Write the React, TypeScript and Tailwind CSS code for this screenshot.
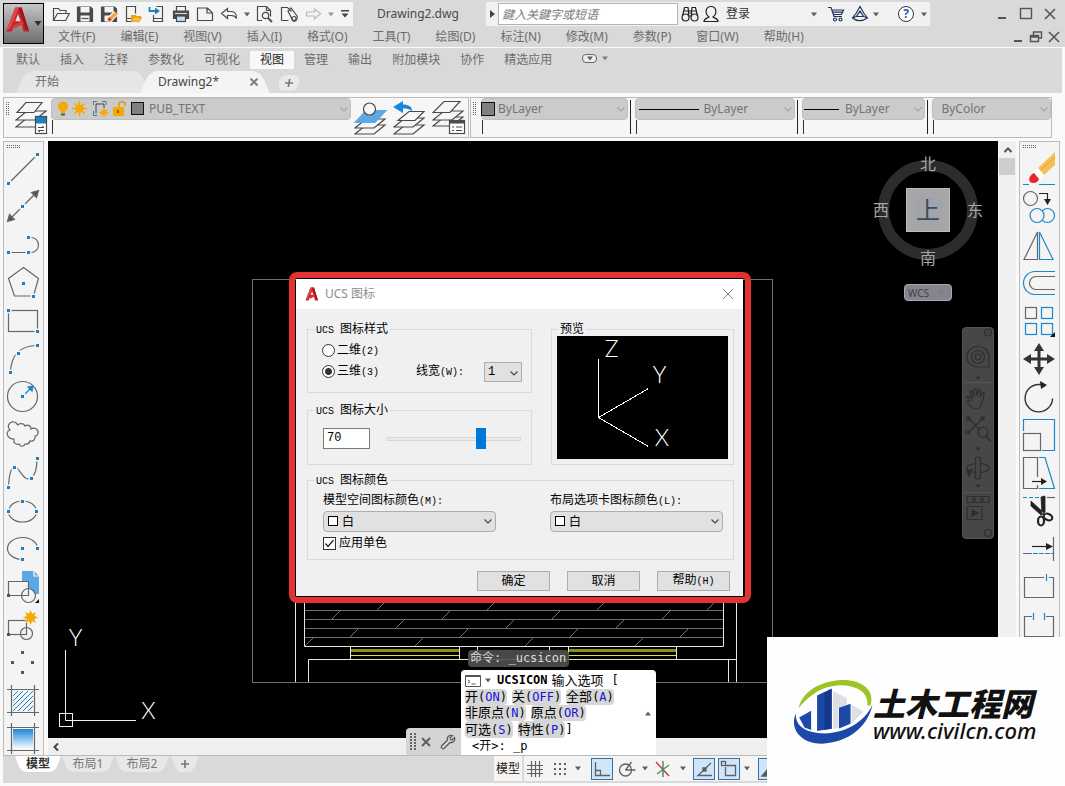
import React from "react";

const UI = "font-['Noto_Sans','Noto_Sans_CJK_SC',sans-serif]";
const CMD = "font-['DejaVu_Sans_Mono','Noto_Sans_CJK_SC',monospace]";

type Kids = { children?: React.ReactNode };

function Caret({ className = "" }: { className?: string }) {
  return (
    <svg viewBox="0 0 8 5" className={`h-[5px] w-2 shrink-0 ${className}`} fill="#606060">
      <path d="M1 0.5h6L4 4.5z" />
    </svg>
  );
}

function IconButton({ label, children, className = "w-6" }: Kids & { label: string; className?: string }) {
  return (
    <button aria-label={label} className={`flex h-6 shrink-0 items-center justify-center ${className}`}>
      {children}
    </button>
  );
}

function Small({ children, w = 18 }: Kids & { w?: number }) {
  return (
    <svg viewBox={`0 0 ${w} 18`} width={w} height={18} fill="none" stroke="#4a4a4a" strokeWidth="1.2">
      {children}
    </svg>
  );
}

function AutoLogo({ className }: { className: string }) {
  return (
    <svg viewBox="0 0 26 28" className={className}>
      <path d="M10 1h7l8 26h-6l-2-7H9l-3 7H0z" fill="#c4242b" />
      <path d="M10 1h4L5 23l-5 4z" fill="#e2464a" />
      <path d="M13 8l3 8h-6z" fill="#f0d5d5" />
      <path d="M17 1l8 26-4-3L14 1z" fill="#9c161d" />
      <path d="M9 20l9-4 1 3-11 5z" fill="#dd3a3f" />
    </svg>
  );
}

/* ---------- title bar ---------- */

function QuickAccess() {
  return (
    <div className="flex h-6 items-center bg-[#f4f4f4] pl-[5px]">
      <IconButton label="打开">
        <Small>
          <path d="M1.5 15.5v-12h5l1.5 2h6v3M1.5 15.5l4-7h12l-4 7z" />
        </Small>
      </IconButton>
      <IconButton label="保存">
        <Small>
          <path d="M1.5 2h13l2 2v12.5h-15z" fill="#4a4a4a" />
          <rect x="4.5" y="2" width="9" height="5.5" fill="#f4f4f4" stroke="none" />
          <rect x="4.5" y="10.5" width="9" height="6" fill="#f4f4f4" stroke="none" />
          <path d="M5.5 13.5h7" />
        </Small>
      </IconButton>
      <IconButton label="另存为">
        <Small>
          <path d="M1.5 2h13l2 2v12.5h-15z" fill="#4a4a4a" />
          <rect x="4.5" y="2" width="9" height="5.5" fill="#f4f4f4" stroke="none" />
          <rect x="4.5" y="10.5" width="8" height="6" fill="#f4f4f4" stroke="none" />
          <path d="M8 16l8-8" stroke="#f4f4f4" strokeWidth="6" />
          <path d="M10 14l6.500-6" stroke="#f0a830" strokeWidth="3.500" />
          <path d="M8.500 15.500l2-2" stroke="#e23232" strokeWidth="3.500" />
        </Small>
      </IconButton>
      <IconButton label="从移动设备打开">
        <Small>
          <path d="M7 16.500H2.500v-15h9v7M3 13.500h4" />
          <path d="M7.500 16.500v-6h4l1 1h4v1.500z" fill="#e8a020" stroke="#e8a020" />
          <path d="M7.500 16.500l2-4h8l-2 4z" fill="#f8bc40" stroke="#e8a020" strokeWidth="0.800" />
        </Small>
      </IconButton>
      <IconButton label="保存到移动设备">
        <Small>
          <path d="M5.500 10v6.500h9v-15h-6M6 13.500h8" />
          <path d="M1.500 2v4h8" stroke="#1b7fc4" strokeWidth="1.800" />
          <path d="M7 2.500L12 6l-5 3.500z" fill="#1b7fc4" stroke="none" />
        </Small>
      </IconButton>
      <IconButton label="打印">
        <Small>
          <path d="M4.500 6V1.500h9V6" />
          <path d="M1.500 6h15v7.500h-15z" fill="#4a4a4a" />
          <path d="M3 8.500h12" stroke="#c8d8e4" />
          <rect x="4.500" y="11" width="9" height="5.500" fill="#bfe0f7" />
        </Small>
      </IconButton>
      <IconButton label="新建">
        <Small>
          <path d="M1.500 3h10l5 5v7.500h-15zM11 3v5h5" />
        </Small>
      </IconButton>
      <IconButton label="放弃">
        <Small>
          <path d="M1.500 8.500l6-5v3h4c4 0 5 3 5 7-1-2-3-3-5-3h-4v3z" />
        </Small>
      </IconButton>
      <IconButton label="放弃列表" className="w-3">
        <Caret />
      </IconButton>
      <IconButton label="打印预览">
        <Small>
          <path d="M6 15.500H1.500v-14h9l4 4v6M10.500 1.500v4h4" />
          <circle cx="9.500" cy="10.500" r="3.200" />
          <path d="M12 13l4 4" strokeWidth="1.800" />
        </Small>
      </IconButton>
      <IconButton label="发布">
        <Small>
          <path d="M1.500 15.500v-13h6l4 4M1.500 15.500h7M8 6l3-3 6 8c1 4-2 6-4 5z" />
          <circle cx="14" cy="13.500" r="2" />
        </Small>
      </IconButton>
      <IconButton label="重做">
        <svg viewBox="0 0 18 18" width={18} height={18} fill="none" stroke="#b9b9b9" strokeWidth="1.200">
          <path d="M16.500 8.500l-6-4.500v3H2.500v4h8v3z" />
        </svg>
      </IconButton>
      <IconButton label="重做列表" className="w-3">
        <Caret className="opacity-60" />
      </IconButton>
      <IconButton label="自定义" className="w-4">
        <svg viewBox="0 0 8 8" className="size-2 fill-[#444]">
          <path d="M0 0h8v1.500H0zM0.500 3.500h7L4 7.500z" />
        </svg>
      </IconButton>
    </div>
  );
}

function InfoCenter() {
  return (
    <div className="flex h-6 items-center bg-[#f1f1f1]">
      <button aria-label="收拢" className="flex w-3 justify-center">
        <svg viewBox="0 0 5 8" className="h-2 w-[5px] fill-[#444]">
          <path d="M0 0l5 4-5 4z" />
        </svg>
      </button>
      <input
        aria-label="搜索"
        placeholder="鍵入关鍵字或短语"
        className="h-[22px] w-[180px] border border-[#b4b4b4] bg-white px-[3px] text-xs italic text-[#555] placeholder:text-[#777]"
      />
      <IconButton label="查找">
        <Small>
          <g stroke="#222">
            <circle cx="4.500" cy="12.500" r="3.500" />
            <circle cx="13.500" cy="12.500" r="3.500" />
            <path d="M1.500 11l2-8.500h3.500L8 9M16.500 11l-2-8.500H11L10 9M7.500 6h3v5h-3zM3 6h4M11 6h4" />
          </g>
        </Small>
      </IconButton>
      <button className="flex items-center gap-[6px] text-xs text-[#333]">
        <Small>
          <path d="M2 16.500c0-3 3-3 5-4.500-5-4-3-10.500 2-10.500s7 6.500 2 10.500c2 1.500 5 1.500 5 4.500z" stroke="#222" />
        </Small>
        登录
      </button>
      <IconButton label="登录选项" className="ml-[58px] w-3">
        <Caret />
      </IconButton>
      <IconButton label="应用商店" className="ml-1 w-6">
        <Small>
          <path d="M1 2.500h3l3 9h8M4.500 5h12l-2 4.500H6.500M5.500 7.200h10" stroke="#24335c" />
          <circle cx="8" cy="14.500" r="1.500" stroke="#24335c" />
          <circle cx="13.500" cy="14.500" r="1.500" stroke="#24335c" />
        </Small>
      </IconButton>
      <IconButton label="保持连接">
        <Small>
          <path d="M9 1.500l4 7 3.500 4.500c-5 3.500-11 3.500-15 0L5 8.500zM9 6l-3.500 5.500h7zM5 8.500L1.500 13M5.500 11.500L1.500 13M12.500 11.500l4 1.500" stroke="#24335c" />
        </Small>
      </IconButton>
      <IconButton label="连接选项" className="w-2">
        <Caret />
      </IconButton>
      <IconButton label="帮助" className="ml-[14px] w-6">
        <span className="flex size-4 items-center justify-center rounded-full border border-[#333] bg-white text-xs font-bold text-[#1c62b8]">
          ?
        </span>
      </IconButton>
      <IconButton label="帮助选项" className="w-3">
        <Caret />
      </IconButton>
    </div>
  );
}

function WindowButtons({ small = false }: { small?: boolean }) {
  return (
    <div className={small ? "flex items-center gap-[2px]" : "flex items-center gap-2"}>
      <button aria-label="最小化">
        <svg viewBox="0 0 16 14" className="h-[14px] w-4" stroke="#555" strokeWidth="2">
          <path d="M4 11h8" />
        </svg>
      </button>
      <button aria-label={small ? "还原" : "最大化"}>
        <svg viewBox="0 0 16 14" className="h-[14px] w-4" fill="none" stroke="#555" strokeWidth="1.400">
          {small ? <path d="M2.500 5.500h8v6h-8zM5.500 5V2h8v6H11M2.500 7h8" /> : <rect x="2.500" y="1.500" width="11" height="10" />}
        </svg>
      </button>
      <button aria-label="关闭">
        <svg viewBox="0 0 16 14" className="h-[14px] w-4" stroke="#555" strokeWidth="1.600">
          <path d="M3 2l10 10M13 2L3 12" />
        </svg>
      </button>
    </div>
  );
}

const menus = ["文件(F)", "编辑(E)", "视图(V)", "插入(I)", "格式(O)", "工具(T)", "绘图(D)", "标注(N)", "修改(M)", "参数(P)", "窗口(W)", "帮助(H)"];

function Header() {
  return (
    <header className="flex bg-[#d9d9d9] pl-[3px]">
      <button
        aria-label="应用程序菜单"
        className="mt-[3px] flex h-[41px] w-[41px] shrink-0 items-center justify-center border border-black bg-gradient-to-b from-[#c6c6c6] to-[#6e6e6e]"
      >
        <AutoLogo className="mb-2 h-[27px] w-6" />
        <svg viewBox="0 0 8 5" className="ml-1 h-[5px] w-2 shrink-0 fill-[#2a2f36]">
          <path d="M0.5 0h7L4 5z" />
        </svg>
      </button>
      <div className="min-w-0 flex-1">
        <div className="flex items-center pt-[2px]">
          <QuickAccess />
          <h1 className="ml-6 w-[109px] shrink-0 whitespace-nowrap text-xs text-[#4a4a4a]">Drawing2.dwg</h1>
          <InfoCenter />
          <div className="ml-auto pr-[7px]">
            <WindowButtons />
          </div>
        </div>
        <div className="flex h-[21px] items-center">
          <nav className="flex gap-[25px] whitespace-nowrap pl-[14px] text-xs text-[#6c6c6c]">
            {menus.map((m) => (
              <button key={m}>{m}</button>
            ))}
          </nav>
          <div className="ml-auto pr-[3px]">
            <WindowButtons small />
          </div>
        </div>
      </div>
    </header>
  );
}

/* ---------- ribbon and file tabs ---------- */

const ribbonTabs = ["默认", "插入", "注释", "参数化", "可视化", "视图", "管理", "输出", "附加模块", "协作", "精选应用"];

function FileTabs() {
  return (
    <div className="flex h-[22px] items-end whitespace-nowrap pl-[18px] text-xs text-[#6c6c6c]">
      <button className="relative isolate h-[22px] w-[124px] pl-[14px] text-left before:absolute before:inset-y-0 before:left-0 before:-z-10 before:w-2/3 before:-skew-x-[24deg] before:rounded-tl-lg before:bg-[#e6e6e6] after:absolute after:inset-y-0 after:right-0 after:-z-10 after:w-2/3 after:skew-x-[24deg] after:rounded-tr-lg after:bg-[#e6e6e6]">
        开始
      </button>
      <div className="relative isolate flex h-[22px] w-[120px] items-center pl-[13px] text-[#444] before:absolute before:inset-y-0 before:left-0 before:-z-10 before:w-2/3 before:-skew-x-[24deg] before:rounded-tl-lg before:bg-[#f4f4f4] after:absolute after:inset-y-0 after:right-0 after:-z-10 after:w-2/3 after:skew-x-[24deg] after:rounded-tr-lg after:bg-[#f4f4f4]">
        <button>Drawing2*</button>
        <button aria-label="关闭标签" className="ml-[31px]">
          <svg viewBox="0 0 8 8" className="size-2" stroke="#808080" strokeWidth="2">
            <path d="M0.500 0.500l7 7M7.500 0.500l-7 7" />
          </svg>
        </button>
      </div>
      <button
        aria-label="新图形"
        className="ml-[14px] mb-[2px] flex h-4 w-[20px] -skew-x-[10deg] items-center justify-center rounded-md bg-[#e9e9e9]"
      >
        <svg viewBox="0 0 8 8" className="size-2" stroke="#777" strokeWidth="1.600">
          <path d="M4 0v8M0 4h8" />
        </svg>
      </button>
    </div>
  );
}

function Ribbon() {
  return (
    <section className="mx-[3px] mt-px bg-[#d9d9d9] pt-[3px]">
      <div className="flex h-[20px] items-start whitespace-nowrap pl-[3px] text-xs text-[#6c6c6c]">
        {ribbonTabs.map((t) => (
          <button key={t} className={t === "视图" ? "h-[18px] bg-[#f8f8f8] px-[10px] text-[#222]" : "h-[18px] px-[10px]"}>
            {t}
          </button>
        ))}
        <button aria-label="功能区选项" className="ml-[20px] flex h-[15px] items-center gap-1">
          <span className="flex h-[9px] w-[15px] items-center justify-center rounded-sm border border-[#666] bg-[#eee]">
            <Caret />
          </span>
          <Caret className="opacity-70" />
        </button>
      </div>
      <FileTabs />
    </section>
  );
}

/* ---------- property toolbar ---------- */

function Grip({ horizontal = false }: { horizontal?: boolean }) {
  return horizontal ? (
    <svg viewBox="0 0 14 4" className="h-1 w-[14px] self-start" fill="#666">
      {[0, 2, 4, 6, 8, 10, 12].map((x) => (
        <path key={x} d={`M${x} 0h1v1h-1zM${x} 2h1v1h-1z`} />
      ))}
    </svg>
  ) : (
    <svg viewBox="0 0 4 14" className="mt-1 h-[14px] w-1 shrink-0" fill="#666">
      {[0, 2, 4, 6, 8, 10, 12].map((y) => (
        <path key={y} d={`M0 ${y}h1v1h-1zM2 ${y}h1v1h-1z`} />
      ))}
    </svg>
  );
}

function Chevron({ className }: { className: string }) {
  return (
    <svg viewBox="0 0 8 5" className={`pointer-events-none absolute h-[5px] w-2 ${className}`} fill="none" stroke="currentColor" strokeWidth="1.200">
      <path d="M0.500 0.500L4 4l3.500-3.500" />
    </svg>
  );
}

function PropertySelect({
  label,
  value,
  pad,
  width,
  divider = true,
  children,
}: Kids & { label: string; value: string; pad: string; width: string; divider?: boolean }) {
  return (
    <div className={`flex gap-[2px] ${width}`}>
      <div className="flex-1">
        <div className="relative flex h-[22px] items-center">
          <select
            aria-label={label}
            className={`h-full w-full appearance-none rounded-sm border border-[#bebebe] bg-[#cbcbcb] text-xs text-[#747474] ${pad}`}
          >
            <option>{value}</option>
          </select>
          <span className="pointer-events-none absolute left-0 flex h-full items-center">{children}</span>
          <Chevron className="right-[3px] top-[9px] text-[#a4a4a4]" />
        </div>
        <div className="ml-px h-[14px] border-l border-[#333]" />
      </div>
      {divider && <div className="mt-[2px] h-[34px] w-px bg-[#222]" />}
    </div>
  );
}

const sheet = (y: number, fill = "#f6f6f6") => (
  <path d={`M1 ${y + 9}h19l11-9H12z`} fill={fill} />
);

function LayerIcon({ kind }: { kind: "manager" | "iso" | "prev" | "states" }) {
  return (
    <svg viewBox="0 0 34 36" className="h-9 w-[34px] shrink-0" fill="none" stroke="#4a4a4a" strokeWidth="1.200">
      {kind === "manager" && (
        <>
          {sheet(18)}
          {sheet(11)}
          <path d="M2 12.500h17l8-10H11z" fill="#f6f6f6" />
          <rect x="20.500" y="16.500" width="11" height="17" fill="#fff" />
          <rect x="21" y="17" width="10" height="6.500" fill="#1b7fc4" stroke="none" />
          <path d="M23 27.500h6l-2-1.500M29 30.500h-6l2 1.500" strokeWidth="1" />
        </>
      )}
      {kind === "iso" && (
        <>
          {sheet(25)}
          {sheet(19)}
          <path d="M1 22.500h20l11-12H12z" fill="#5aa9e6" stroke="#5aa9e6" />
          <circle cx="15.500" cy="9" r="6" fill="#f6f6f6" />
        </>
      )}
      {kind === "prev" && (
        <>
          {sheet(25)}
          {sheet(18)}
          <path d="M5 20.500h17l9-9H16z" fill="#f6f6f6" />
          <path d="M0 7l10-6v3.500c6 0 9 2 9 7-3-3-5-3-9-3V13z" fill="#1b87dc" stroke="none" />
        </>
      )}
      {kind === "states" && (
        <>
          {sheet(17)}
          {sheet(11)}
          <path d="M1 12.500h17l10-11H12z" fill="#f6f6f6" />
          <rect x="17.500" y="20.500" width="15" height="13" fill="#fff" />
          <path d="M17 22h16" strokeWidth="3" />
          <path d="M20 27h2M24 27h6M20 30.500h2M24 30.500h6" />
        </>
      )}
    </svg>
  );
}

function PropertyBar() {
  return (
    <section className="mx-[3px] mt-1 flex h-[41px]">
      <div className="flex w-[466px] border border-[#b9bcba] bg-[#f6f6f6] pl-[2px]">
        <Grip />
        <button aria-label="图层特性" className="ml-[5px] mr-[2px] flex items-center">
          <LayerIcon kind="manager" />
        </button>
        <PropertySelect label="图层" value="PUB_TEXT" pad="pl-[97px]" width="w-[300px]" divider={false}>
          <svg viewBox="0 0 94 20" width={94} height={20}>
            <circle cx="12" cy="7.500" r="5" fill="#f5a800" />
            <path d="M10 11h4v3h-4z" fill="#f5a800" />
            <path d="M10 14.500h4v2h-4z" fill="#555" />
            <circle cx="28.500" cy="9.500" r="4.200" fill="#f5a800" />
            <path d="M28.500 2v15M21 9.500h15M23.500 4.500l10 10M33.500 4.500l-10 10" stroke="#f5a800" strokeWidth="1.500" />
            <path d="M42.500 6V2.500H46M51 2.500h4V6M42.500 12v4.500H46" stroke="#3d78a8" fill="none" />
            <path d="M45 14.500V5h8v4" stroke="#444" fill="none" />
            <circle cx="53" cy="13.500" r="2.800" fill="#f5a800" />
            <path d="M53 8.800v9.400M48.300 13.500h9.400M49.700 10.200l6.600 6.600M56.300 10.200l-6.600 6.600" stroke="#f5a800" />
            <path d="M68 9V5c0-3 6-3 6 0v2" stroke="#e09a10" strokeWidth="1.500" fill="none" />
            <rect x="62" y="8" width="11" height="9" fill="#f5a800" />
            <path d="M67 11v3" stroke="#704c00" strokeWidth="1.500" />
            <rect x="80.500" y="3.500" width="12" height="12" fill="#808080" stroke="#111" />
          </svg>
        </PropertySelect>
        <div className="flex flex-1 items-center justify-around">
          <button aria-label="置为当前"><LayerIcon kind="iso" /></button>
          <button aria-label="上一个图层"><LayerIcon kind="prev" /></button>
          <button aria-label="图层状态"><LayerIcon kind="states" /></button>
        </div>
      </div>
      <div className="ml-px flex w-[582px] gap-1 border border-[#b9bcba] bg-[#f6f6f6] pl-[2px]">
        <Grip />
        <PropertySelect label="颜色" value="ByLayer" pad="pl-4" width="w-[151px]">
          <span className="size-[14px] border border-[#111] bg-[#808080]" />
        </PropertySelect>
        <PropertySelect label="线型" value="ByLayer" pad="pl-[67px]" width="w-[163px]">
          <span className="ml-1 h-px w-[60px] bg-black" />
        </PropertySelect>
        <PropertySelect label="线宽" value="ByLayer" pad="pl-[42px]" width="w-[127px]">
          <span className="ml-[2px] h-px w-[35px] bg-black" />
        </PropertySelect>
        <PropertySelect label="打印样式" value="ByColor" pad="pl-2" width="w-[119px]" divider={false} />
      </div>
    </section>
  );
}

/* ---------- side tool bars ---------- */

const B = "#1b87c9";

function Dots({ at }: { at: number[][] }) {
  return (
    <g stroke="none">
      {at.map(([x, y]) => (
        <g key={`${x}-${y}`}>
          <rect x={x - 2.5} y={y - 2.5} width="6" height="6" fill="#f4f4f4" />
          <rect x={x - 1} y={y - 1} width="3" height="3" fill="#1f7fc0" />
        </g>
      ))}
    </g>
  );
}

function burst(cx: number, cy: number, r: number) {
  return Array.from({ length: 16 }, (_, i) => {
    const a = (i * Math.PI) / 8;
    const q = i % 2 ? r * 0.55 : r;
    return `${(cx + q * Math.sin(a)).toFixed(1)},${(cy - q * Math.cos(a)).toFixed(1)}`;
  }).join(" ");
}

const drawTools: [string, React.ReactNode][] = [
  ["直线", <><path d="M30.500 2.500l-29 29" /><Dots at={[[30, 2], [1, 31]]} /></>],
  ["构造线", <><path d="M28 4L4 28" /><path d="M31.500 0.500l-7 2 5 5zM0.500 31.500l2-7 5 5z" fill="#555" /><Dots at={[[15, 16]]} /></>],
  ["多段线", <><path d="M1 24.500h20M21 9.500h3a7.500 7.500 0 0 1 0 15h-3" /><Dots at={[[1, 24], [21, 24], [21, 9]]} /></>],
  ["多边形", <><path d="M16.500 1.500l15 11-5 17.500h-19l-6-17.500z" /><Dots at={[[16, 17], [26, 30]]} /></>],
  ["矩形", <><rect x="1.500" y="6.500" width="29" height="21" /><Dots at={[[1, 6], [30, 27]]} /></>],
  ["圆弧", <><path d="M30 3.500Q4 4 3.500 31" /><Dots at={[[30, 3], [11, 11], [3, 30]]} /></>],
  ["圆", <><circle cx="15.500" cy="16.500" r="15" /><path d="M17 15l6-6" stroke={B} /><path d="M26 6l-5 1 4 4z" fill={B} stroke={B} /><Dots at={[[15, 16]]} /></>],
  ["修订云线", <path d="M3 12c-4-4 0-9 4-8 3 0 3 3 4 3 1-2 6-2 7 1 3-2 6 0 6 3 3-2 8 0 7 4 0 2-2 3-3 3 1 3-2 6-5 5-1 4-4 3-5 3-1 3-5 3-6 0-3 1-6-1-5-5-7 0-9-7-4-9z" />],
  ["样条曲线", <><path d="M1.500 31C2 18 5 5 11 13s8 12 13 9 6-10 6-20" /><Dots at={[[1, 31], [7, 11], [24, 22], [30, 2]]} /></>],
  ["椭圆", <><ellipse cx="15.500" cy="17.500" rx="14" ry="10.500" /><Dots at={[[1, 17], [15, 7], [29, 17]]} /></>],
  ["椭圆弧", <><path d="M30.500 16.500a15 11 0 1 0-15 11" /><Dots at={[[30, 16], [15, 16], [15, 27]]} /></>],
  ["插入块", <><path d="M15 1h12l5 5v18h-4l-7-8v-5h-6z" fill="#5aa9e6" stroke="none" /><path d="M27 1v5h5" stroke="#fff" /><path d="M21.500 18v-6.500h-20v14h13" /><circle cx="21.500" cy="25.500" r="7" /><path d="M1.500 25.500h20v-7" /><rect x="0" y="24" width="3" height="3" fill="#555" stroke="none" /><path d="M32 29v4h-4z" fill="#111" stroke="none" /></>],
  ["创建块", <><rect x="1.500" y="12.500" width="18" height="14" /><circle cx="19.500" cy="25.500" r="6" /><rect x="0" y="25" width="3" height="3" fill="#555" stroke="none" /><polygon points={burst(23.5, 9.5, 8)} fill="#f5a800" stroke="#f4f4f4" strokeWidth="0.500" /></>],
  ["点", <path d="M14 5h3v3h-3zM4 15h3v3H4zM24 15h3v3h-3zM14 25h3v3h-3z" fill="#555" stroke="none" />],
  ["图案填充", <><path d="M6 12l5-5M6 17L16 7M6 22L21 7M6 27L26 7M11 27l15-15M16 27l10-10M21 27l5-5" stroke={B} strokeWidth="1" /><path d="M4.500 1v31M27.500 1v31M0 5.500h32M0 28.500h32" /></>],
  ["渐变色", <><defs><linearGradient id="grad" x1="0" y1="0" x2="0" y2="1"><stop offset="0" stopColor="#1b87dc" /><stop offset="1" stopColor="#fff" /></linearGradient></defs><rect x="6" y="7" width="20" height="20" fill="url(#grad)" stroke="none" /><path d="M4.500 1v31M27.500 1v31M0 5.500h32M0 28.500h32" /></>],
];

const editTools: [string, React.ReactNode][] = [
  ["删除", <><path d="M32 0v13L21 23l-6-7z" fill="#f5bf55" stroke="none" /><path d="M32 5L17 18.500" stroke="#e8a030" strokeWidth="1" /><path d="M15 16l6 7-4 4-7-7z" fill="#fff" stroke="none" /><path d="M11 21l5 6c-1 4-6 5-9 3-2-3 0-7 4-9z" fill="#e8262c" stroke="none" /><path d="M0 32.500h6M16 32.500h16" stroke={B} /></>],
  ["复制", <><circle cx="7.500" cy="8.500" r="7" /><path d="M16 3.500h8.500V10" stroke="#222" /><path d="M21 9h7l-3.500 6z" fill="#222" stroke="none" /><circle cx="24.500" cy="25.500" r="7" stroke={B} /><circle cx="14" cy="25.500" r="7" stroke={B} fill="#f4f4f4" /></>],
  ["镜像", <><path d="M14.500 4v27.500H1z" /><path d="M16.500 4v27.500H30z" stroke={B} /></>],
  ["偏移", <><path d="M32 5.500H12a11.500 11.500 0 0 0 0 23h20" stroke={B} /><path d="M32 10.500H13a6.500 6.500 0 0 0 0 13h19" /></>],
  ["阵列", <><rect x="2.500" y="3.500" width="11" height="11" /><g stroke={B}><rect x="18.500" y="3.500" width="11" height="11" /><rect x="2.500" y="19.500" width="11" height="11" /><rect x="18.500" y="19.500" width="11" height="11" /></g><path d="M32 28v5h-5z" fill="#111" stroke="none" /></>],
  ["移动", <path d="M16 1l5 8h-3.500v6.500H24V12l8 5-8 5v-3.500h-6.500V25H21l-5 8-5-8h3.500v-6.500H8V22l-8-5 8-5v3.500h6.500V9H11z" fill="#333" stroke="none" />],
  ["旋转", <><path d="M29.500 18.500A13.700 13.700 0 1 1 16 4.500h3" stroke="#333" strokeWidth="1.400" /><path d="M17 1l7 4-6 4z" fill="#222" stroke="none" /></>],
  ["缩放", <><path d="M0.500 13V1.500h31v31H19" stroke={B} /><rect x="0.500" y="15.500" width="17" height="17" /></>],
  ["拉伸", <><path d="M14.500 21V1.500h-14v31h14V29" /><path d="M16 1.500h6l9.500 31H16" stroke={B} /><path d="M9 25.500h10" stroke="#222" /><path d="M18 22l6 3.500-6 3.500z" fill="#222" stroke="none" /></>],
  ["修剪", <><path d="M0 3.500h17" stroke={B} strokeDasharray="4 2" /><path d="M24 3.500h8" /><path d="M8 7v5l10 9 3-2zM18 3l4-1v16l-3 3z" fill="#222" stroke="#222" strokeWidth="0.800" /><ellipse cx="18" cy="27" rx="3" ry="4.500" stroke="#222" strokeWidth="2.200" /><ellipse cx="25" cy="23" rx="4.500" ry="3" stroke="#222" strokeWidth="2.200" transform="rotate(25 25 23)" /></>],
  ["延伸", <><path d="M9 14.500h16" stroke="#222" /><path d="M23 11l7 3.500-7 3.500z" fill="#222" stroke="none" /><path d="M30.500 5v24M0 21.500h9" /><path d="M10 21.500h20" stroke={B} strokeDasharray="5 1" /></>],
  ["打断于点", <><path d="M21 7.500H1.500v20h29v-20H26" /><path d="M23.500 4v7" stroke={B} /></>],
  ["打断", <><path d="M9 8.500H1.500v20h29v-20H23" /><path d="M10.500 5v7M21.500 5v7" stroke={B} /></>],
];

function ToolBar({ label, tools }: { label: string; tools: [string, React.ReactNode][] }) {
  return (
    <div role="toolbar" aria-label={label} className="flex w-[41px] shrink-0 flex-col border-x border-t border-[#b9bcba] bg-[#f4f4f4] pl-[3px]">
      <div className="h-[10px] pt-[3px]">
        <Grip horizontal />
      </div>
      <div className="flex flex-col gap-[6px]">
        {tools.map(([name, art]) => (
          <button key={name} aria-label={name} className="size-8">
            <svg viewBox="0 0 32 32" className="size-8 overflow-visible" fill="none" stroke="#666" strokeWidth="1.200">
              {art}
            </svg>
          </button>
        ))}
      </div>
    </div>
  );
}

/* ---------- drawing canvas ---------- */

const hatchRows: [number, number][] = [
  [646, 305],
  [637, 350],
  [628, 396],
  [619, 332],
  [610, 377],
];

function Model() {
  return (
    <svg aria-label="模型空间" viewBox="48 141 950 597" width={950} height={597} className="absolute left-0 top-0" fill="none">
      <g stroke="#6f6f6f">
        <rect x="252.500" y="279.500" width="520" height="403" />
        <path d="M304 610.500h419M304 619.500h419M304 628.500h419M304 637.500h419M304 600.500h419" />
        {hatchRows.map(([y, x0]) =>
          [0, 1, 2, 3]
            .map((k) => x0 + k * 110)
            .filter((x) => x < 716)
            .map((x) => <path key={`${x}-${y}`} d={`M${x} ${y}l9-9`} />)
        )}
      </g>
      <g stroke="#e8e8e8">
        <path d="M295.500 600v82M304.500 600v46.500h419V600M736.500 600v82M308.500 682v-22.500h428M728.500 659v23" />
        <path d="M350.500 646v13M459.500 646v13M568.500 646v13M676.500 646v13M477.500 646v7M549.500 646v7" />
      </g>
      <g>
        <path d="M351 650.500h108M569 650.500h107" stroke="#8c9010" strokeWidth="3" />
        <path d="M351 655.500h108M569 655.500h107" stroke="#e0e23c" />
        <path d="M351 659.500h108M569 659.500h107" stroke="#e6e68c" />
      </g>
      <g stroke="#f0f0f0">
        <rect x="59.500" y="713.500" width="13" height="13" />
        <path d="M65.500 650v70.500H136" />
      </g>
      <g fill="#fff" className="font-['Lato',sans-serif] font-light" fontSize="23" textAnchor="middle">
        <text x="75.500" y="646">Y</text>
        <text x="148.500" y="719">X</text>
      </g>
    </svg>
  );
}

function ViewCube() {
  return (
    <div className="absolute right-[15px] top-[13px] flex w-[110px] flex-col items-center text-base leading-5 text-[#a6a6a6]">
      <div className="absolute left-[5px] top-[6px] size-[100px] rounded-full border-[11px] border-[#2c2c2c]" />
      <span className="relative">北</span>
      <div className="relative my-[14px] flex w-full items-center justify-between">
        <span>西</span>
        <button className="flex size-11 items-center justify-center border border-[#bdbdbd] bg-[#a6a6a6] text-2xl text-[#45474e]">
          <span className="flex size-[26px] items-center justify-center bg-[#a0a4ad]">上</span>
        </button>
        <span>东</span>
      </div>
      <span className="relative mt-[2px]">南</span>
      <button className="mt-4 flex h-[17px] w-12 items-center gap-2 rounded border border-[#a8a8b0] bg-[#85858d] pl-[3px] text-[10px] text-[#3e3e46]">
        WCS
        <Caret className="opacity-20" />
      </button>
    </div>
  );
}

function NavBar() {
  return (
    <div role="toolbar" aria-label="导航栏" className="absolute right-1 top-[186px] h-[212px] w-8 rounded border border-[#555] bg-[#474747]">
      <svg viewBox="0 0 30 210" width={30} height={210} fill="none" stroke="#2e2e2e" strokeWidth="1.200">
        <circle cx="25" cy="4.500" r="3.500" />
        <path d="M24 3l3 3M27 3l-3 3" strokeWidth="0.800" />
        <path d="M4 29a11 10 0 0 1 22-1v11H15a11 10 0 0 1-11-10z" />
        <circle cx="15" cy="29" r="6.500" />
        <circle cx="15" cy="29" r="3" />
        <path d="M13.500 49h3l-1.500 2z" fill="#2e2e2e" />
        <path d="M0 54.500h30" stroke="#555" />
        <path d="M7 73l-3-4c1-2 3 0 5 2l-2-8c2-1 3 2 4 6V61c2-1 3 1 3 7l2-7c2 0 2 3 1 8l3-5c2 0 1 5-1 10-1 5-3 7-6 7s-7-3-9-8z" />
        <path d="M5 90l15 15M20 90L5 105M4 89h3v3H4zM18 89h3v3h-3zM3 103h3v3H3z" />
        <circle cx="20" cy="104" r="5" fill="#474747" />
        <path d="M23 108l4 5" strokeWidth="2" />
        <path d="M13.500 120h3l-1.500 2z" fill="#2e2e2e" />
        <ellipse cx="15" cy="140" rx="11" ry="4.500" />
        <rect x="12.500" y="129" width="5" height="22" rx="2" fill="#474747" />
        <path d="M4 143l5-2-3 7z" fill="#2e2e2e" />
        <path d="M13.500 157h3l-1.500 2z" fill="#2e2e2e" />
        <path d="M0 164.500h30" stroke="#555" />
        <path d="M4 168.500h6v6H4zM12 168.500h6v6h-6zM20 168.500h6v6h-6zM4 178.500h15v13H4z" />
        <path d="M9 182l6 3-6 3z" fill="#2e2e2e" />
        <circle cx="25" cy="205" r="3.500" />
      </svg>
    </div>
  );
}

/* ---------- UCS dialog ---------- */

function M({ children }: Kids) {
  return <span className="font-['Liberation_Mono',monospace] text-[10px]">{children}</span>;
}

function Group({ title, children, className }: { title: React.ReactNode; className: string } & Kids) {
  return (
    <fieldset className={`border border-[#dadada] ${className}`}>
      <legend className="ml-[6px] h-4 whitespace-nowrap px-[2px] leading-4">{title}</legend>
      {children}
    </fieldset>
  );
}

function ColorSelect({ id, label, letter }: { id: string; label: string; letter: string }) {
  return (
    <div className="w-[173px]">
      <label htmlFor={id} className="block h-[14px] whitespace-nowrap leading-[14px]">
        {label}
        <M>({letter}):</M>
      </label>
      <div className="relative mt-1">
        <select id={id} className="h-[21px] w-full appearance-none rounded-sm border border-[#adadad] bg-[#e1e1e1] pl-[18px] text-xs text-black">
          <option>白</option>
        </select>
        <span className="pointer-events-none absolute left-[5px] top-[5px] size-[10px] border border-black bg-white" />
        <Chevron className="right-1 top-2 text-[#444]" />
      </div>
    </div>
  );
}

function PreviewAxes() {
  return (
    <svg viewBox="0 0 171 123" width={171} height={123} className="mx-auto -mt-px overflow-visible bg-black" aria-label="UCS 预览">
      <path d="M41.500 23v58.500l50-29M41.500 81.500l50 29" stroke="#fff" fill="none" shapeRendering="crispEdges" />
      <g fill="#fff" className="font-['Lato',sans-serif] font-light" fontSize="23" textAnchor="middle">
        <text x="54.500" y="21">Z</text>
        <text x="102.500" y="47">Y</text>
        <text x="105" y="110">X</text>
      </g>
    </svg>
  );
}

function UcsDialog() {
  return (
    <div className="absolute left-[241px] top-[131px] w-[462px] rounded-lg border-[6px] border-[#e23232] p-px pr-[2px]">
      <div role="dialog" aria-label="UCS 图标" className="bg-[#f0f0f0] text-xs text-black">
        <div className="flex h-[30px] items-center bg-white px-2 text-[#8c8c8c]">
          <AutoLogo className="h-[14px] w-4" />
          <h2 className="ml-[5px]">UCS 图标</h2>
          <button aria-label="关闭" className="ml-auto mr-px">
            <svg viewBox="0 0 12 12" className="size-3" stroke="#888">
              <path d="M1 1l10 10M11 1L1 11" />
            </svg>
          </button>
        </div>
        <div className="px-[9px] pb-[5px] pl-[11px] pt-3">
          <div className="flex justify-between">
            <div className="flex w-[225px] flex-col gap-[9px]">
              <Group title={<><M>UCS </M>图标样式</>} className="h-[72px]">
                <div className="pl-[14px] pr-[9px] pt-[3px]">
                  <div className="flex h-[21px] items-center">
                    <label className="flex items-center gap-[2px]">
                      <input type="radio" name="style" className="size-[13px] appearance-none rounded-full border border-[#333] bg-white" />
                      <span>二维<M>(2)</M></span>
                    </label>
                  </div>
                  <div className="flex h-[21px] items-center">
                    <label className="flex items-center gap-[2px]">
                      <input
                        type="radio"
                        name="style"
                        defaultChecked
                        className="size-[13px] appearance-none rounded-full border border-[#333] bg-white bg-[radial-gradient(circle,#333_3px,transparent_4px)]"
                      />
                      <span>三维<M>(3)</M></span>
                    </label>
                    <label htmlFor="lw" className="ml-auto">线宽<M>(W):</M></label>
                    <div className="relative ml-5">
                      <select id="lw" className="h-5 w-[38px] appearance-none border border-[#adadad] bg-[#e1e1e1] pl-[3px] font-['Liberation_Mono',monospace] text-xs">
                        <option>1</option>
                      </select>
                      <Chevron className="right-1 top-[9px] text-[#444]" />
                    </div>
                  </div>
                </div>
              </Group>
              <Group title={<><M>UCS </M>图标大小</>} className="h-[63px]">
                <div className="flex items-center gap-[17px] pl-[15px] pr-[9px] pt-[10px]">
                  <input
                    aria-label="图标大小"
                    defaultValue="70"
                    className="h-[21px] w-[47px] border border-[#7a7a7a] bg-white px-[3px] pb-[2px] font-['Liberation_Mono',monospace] text-xs"
                  />
                  <input
                    type="range"
                    aria-label="图标大小滑块"
                    min={5}
                    max={95}
                    defaultValue={70}
                    className="h-[21px] w-[134px] appearance-none bg-transparent [&::-webkit-slider-runnable-track]:h-1 [&::-webkit-slider-runnable-track]:border [&::-webkit-slider-runnable-track]:border-[#d6d6d6] [&::-webkit-slider-runnable-track]:bg-[#e7eaea] [&::-webkit-slider-thumb]:-mt-[10px] [&::-webkit-slider-thumb]:h-[21px] [&::-webkit-slider-thumb]:w-[10px] [&::-webkit-slider-thumb]:appearance-none [&::-webkit-slider-thumb]:bg-[#0078d7]"
                  />
                </div>
              </Group>
            </div>
            <Group title="预览" className="h-[144px] w-[183px]">
              <PreviewAxes />
            </Group>
          </div>
          <Group title={<><M>UCS </M>图标颜色</>} className="mt-[7px] h-[88px]">
            <div className="flex justify-between pl-[15px] pr-[10px] pt-[5px]">
              <ColorSelect id="modelColor" label="模型空间图标颜色" letter="M" />
              <ColorSelect id="layoutColor" label="布局选项卡图标颜色" letter="L" />
            </div>
            <label className="ml-[15px] mt-[3px] flex items-center gap-[3px]">
              <span className="relative flex">
                <input type="checkbox" defaultChecked className="peer size-[13px] appearance-none border border-[#333] bg-white" />
                <svg viewBox="0 0 13 13" className="pointer-events-none absolute hidden size-[13px] peer-checked:block" fill="none" stroke="#222" strokeWidth="1.300">
                  <path d="M2.500 6.500L5 9.500l5.500-6.500" />
                </svg>
              </span>
              应用单色
            </label>
          </Group>
          <div className="mt-[11px] flex justify-end gap-[17px] pr-1">
            {["确定", "取消"].map((t) => (
              <button key={t} className="h-5 w-[73px] border border-[#adadad] bg-[#e1e1e1] leading-4">{t}</button>
            ))}
            <button className="h-5 w-[73px] border border-[#adadad] bg-[#e1e1e1] leading-4">帮助<M>(H)</M></button>
          </div>
        </div>
      </div>
    </div>
  );
}

/* ---------- command line ---------- */

const rows: [string, string][][] = [
  [["开", "ON"], ["关", "OFF"], ["全部", "A"]],
  [["非原点", "N"], ["原点", "OR"]],
  [["可选", "S"], ["特性", "P"]],
];

function CommandLine() {
  return (
    <div className={`absolute bottom-0 left-[358px] flex items-end text-[13px] leading-[17px] text-black ${CMD}`}>
      <div className="flex h-[27px] w-[55px] items-center gap-[5px] rounded-tl bg-[#d4d4d4] pl-1">
        <svg viewBox="0 0 6 18" className="h-[18px] w-[6px]" fill="#666">
          {[0, 3, 6, 9, 12, 15].map((y) => (
            <path key={y} d={`M0 ${y}h2v2h-2zM4 ${y}h2v2h-2z`} />
          ))}
        </svg>
        <button aria-label="关闭命令行">
          <svg viewBox="0 0 10 10" className="size-[10px]" stroke="#606060" strokeWidth="2">
            <path d="M1 1l8 8M9 1L1 9" />
          </svg>
        </button>
        <button aria-label="自定义命令行" className="ml-1">
          <svg viewBox="0 0 16 16" className="size-4" fill="none" stroke="#555" strokeWidth="1.200">
            <path d="M1.500 12l6-6c-1-3 2-5.500 5-4.500L10 4l0.500 1.500 1.500 0.500 2.500-2.500c1 3-1.500 6-4.500 5l-6 6c-1.500 1-3.500-1-2.500-2.500z" />
          </svg>
        </button>
      </div>
      <div>
        <div className="mb-[3px] ml-[7px] w-[101px] whitespace-pre rounded-sm bg-[#505050]/90 px-[2px] text-xs leading-[17px] text-[#dcdcdc]">命令: _ucsicon</div>
        <div className="flex w-[195px] items-center justify-between rounded-t bg-white pl-1 pt-[2px]">
          <div className="text-xs leading-[17px]">
            <div className="flex items-center whitespace-nowrap">
              <svg viewBox="0 0 16 12" className="h-3 w-4" fill="#fff" stroke="#555">
                <path d="M0.500 0.500h15v11h-15zM0 1.500h16" />
                <path d="M3 5l2 1.500L3 8M6.500 9h4" fill="none" />
              </svg>
              <Caret className="ml-[3px] mr-[5px]" />
              <b>UCSICON</b>
              <span className="ml-1 text-[13px]">输入选项</span>
              <span className="ml-2">[</span>
            </div>
            {rows.map((r, i) => (
              <div key={i} className="flex gap-[5px] whitespace-nowrap">
                {r.map(([n, k]) => (
                  <button key={n} className="rounded-sm bg-[#d6d6d6] leading-[16px]">
                    <span className="text-[13px]">{n}</span>(<span className="text-[#1414dc]">{k}</span>)
                  </button>
                ))}
                {i === 2 && <span className="-ml-[5px]">]</span>}
              </div>
            ))}
            <div className="pl-[7px]">
              <label>
                &lt;开&gt;:{" "}
                <input aria-label="命令输入" defaultValue="_p" className="h-4 w-10 bg-transparent align-top outline-none" />
              </label>
            </div>
          </div>
          <Caret className="mr-1 rotate-180" />
        </div>
      </div>
    </div>
  );
}

function Workspace() {
  return (
    <main className="mt-[3px] flex min-h-[614px] flex-1 pl-[3px] pr-[5px]">
      <ToolBar label="绘图" tools={drawTools} />
      <div className="relative ml-1 flex min-w-0 flex-1 flex-col">
        <div className="relative flex-1 overflow-hidden bg-black">
          <Model />
          <ViewCube />
          <NavBar />
          <UcsDialog />
        </div>
        <div className="flex h-[17px] items-center bg-[#efefef] pl-1">
          <button aria-label="向左滚动">
            <svg viewBox="0 0 8 10" className="h-[10px] w-2" fill="none" stroke="#444" strokeWidth="2">
              <path d="M6 1.500L2.500 5 6 8.500" />
            </svg>
          </button>
        </div>
        <CommandLine />
      </div>
      <div className="ml-px mr-[3px] flex w-[17px] flex-col items-stretch bg-[#f0f0f0]">
        <button aria-label="向上滚动" className="flex h-[17px] items-center justify-center">
          <svg viewBox="0 0 10 6" className="h-[6px] w-[10px]" fill="none" stroke="#555" strokeWidth="2">
            <path d="M1.500 5L5 1.500 8.500 5" />
          </svg>
        </button>
        <div className="mr-px h-[17px] bg-[#cdcdcd]" />
      </div>
      <ToolBar label="修改" tools={editTools} />
    </main>
  );
}

/* ---------- status bar ---------- */

function Status({ label, on = false, children }: Kids & { label: string; on?: boolean }) {
  return (
    <button
      aria-label={label}
      className={
        on
          ? "flex h-[22px] w-[22px] shrink-0 items-center justify-center border border-[#3b6f9f] bg-[#cfe6fa]"
          : "flex h-[22px] w-[22px] shrink-0 items-center justify-center"
      }
    >
      <svg viewBox="0 0 18 18" width={18} height={18} fill="none" stroke="#606060" strokeWidth="1.300">
        {children}
      </svg>
    </button>
  );
}

const layoutTab =
  "relative isolate h-4 before:absolute before:inset-y-0 before:left-0 before:-z-10 before:w-2/3 before:skew-x-[20deg] before:rounded-bl-md after:absolute after:inset-y-0 after:right-0 after:-z-10 after:w-2/3 after:-skew-x-[20deg] after:rounded-br-md";

function StatusBar() {
  return (
    <footer className="mx-[3px] mb-[3px] flex h-7 border-t border-[#b9bcba] bg-[#d9d9d9] text-xs">
      <div className="flex w-[491px] shrink-0 gap-[7px] whitespace-nowrap pl-[15px] leading-4 text-[#777]">
        <button className={`${layoutTab} w-[40px] font-bold text-[#333] before:bg-white after:bg-white`}>模型</button>
        <button className={`${layoutTab} w-[46px] before:bg-[#e8e8e8] after:bg-[#e8e8e8]`}>布局1</button>
        <button className={`${layoutTab} w-[48px] before:bg-[#e8e8e8] after:bg-[#e8e8e8]`}>布局2</button>
        <button aria-label="新建布局" className={`${layoutTab} ml-px flex w-[22px] items-center justify-center before:bg-[#e8e8e8] after:bg-[#e8e8e8]`}>
          <svg viewBox="0 0 8 8" className="size-2" stroke="#777" strokeWidth="1.600">
            <path d="M4 0v8M0 4h8" />
          </svg>
        </button>
      </div>
      <div className="flex h-[25px] items-center">
        <button className="mr-[2px] flex h-full w-7 items-center justify-center whitespace-nowrap bg-[#f8f4f2] text-[#222]">模型</button>
        <div className="flex h-full items-center gap-[3px] bg-[#f4f4f4]">
          <Status label="栅格"><path d="M5.500 1v16M9.500 1v16M13.500 1v16M1 5.500h16M1 9.500h16M1 13.500h16" strokeWidth="1.200" /></Status>
          <Status label="捕捉">
            <path d="M3 3h2v2H3zM8 3h2v2H8zM13 3h2v2h-2zM3 8h2v2H3zM8 8h2v2H8zM13 8h2v2h-2zM3 13h2v2H3zM8 13h2v2H8zM13 13h2v2h-2z" fill="#606060" stroke="none" />
          </Status>
          <Caret className="mr-[6px]" />
          <Status label="正交" on><path d="M2.500 2v13.500H17M2.500 10.500h5v5" /></Status>
          <Status label="极轴"><circle cx="7.500" cy="10" r="6" /><path d="M7.500 10h10M7.500 10l6-8" /></Status>
          <Caret />
          <Status label="等轴测"><path d="M2 2l13 14" stroke="#c03030" /><path d="M9 1v16" /><path d="M15 5L3 14" stroke="#30a050" /></Status>
          <Caret className="ml-[2px] mr-[3px]" />
          <Status label="对象捕捉追踪" on><path d="M16 3L3 15.500h14" /><path d="M8 8h3v3H8z" fill="#555" /></Status>
          <Status label="二维对象捕捉" on><path d="M6 5.500h9.500v10h-10V7" /><rect x="1.500" y="1.500" width="4" height="4" /></Status>
          <Caret className="mr-1" />
          <Status label="线宽" on><path d="M2 16L12 4l5 12z" fill="#555" /></Status>
        </div>
      </div>
    </footer>
  );
}

function SiteBadge() {
  return (
    <aside className="absolute bottom-0 right-0 flex h-[149px] w-[298px] items-center bg-[#fefefe] pl-[26px]">
      <svg viewBox="86 126 240 196" className="h-[65px] w-20 shrink-0">
        <path d="M102 214C118 150 190 128 244 129c56 3 90 36 74 78l-9-2c6-40-34-60-84-60-50 2-92 30-123 69z" fill="#9cc424" />
        <path d="M206 162l42 22v18l-26 12v60l-16 3zM262 203l36 22-36 35z" fill="#dcdfe4" />
        <path d="M158 176l44-21v120l-44 8zM104 242l36-20v58l-20-8zM224 213l35-12v60l-35 14z" fill="#1c48a8" />
        <path d="M180 168l22-12v120l-22 4z" fill="#15388c" />
        <path d="M94 230c-22 52 22 92 78 91 80-2 140-52 153-117-24 52-82 86-145 86-56 0-88-22-86-60z" fill="#1c48a8" />
      </svg>
      <div className="mt-[6px] whitespace-nowrap italic text-[#111]">
        <p className="text-[32px] font-black leading-[30px]">土木工程网</p>
        <p className="text-[22px] font-medium leading-[22px]">www.civilcn.com</p>
      </div>
    </aside>
  );
}

export default function App() {
  return (
    <div className={`relative flex min-h-screen flex-col overflow-hidden bg-[#f8f9f8] ${UI}`}>
      <Header />
      <Ribbon />
      <PropertyBar />
      <Workspace />
      <StatusBar />
      <SiteBadge />
    </div>
  );
}
